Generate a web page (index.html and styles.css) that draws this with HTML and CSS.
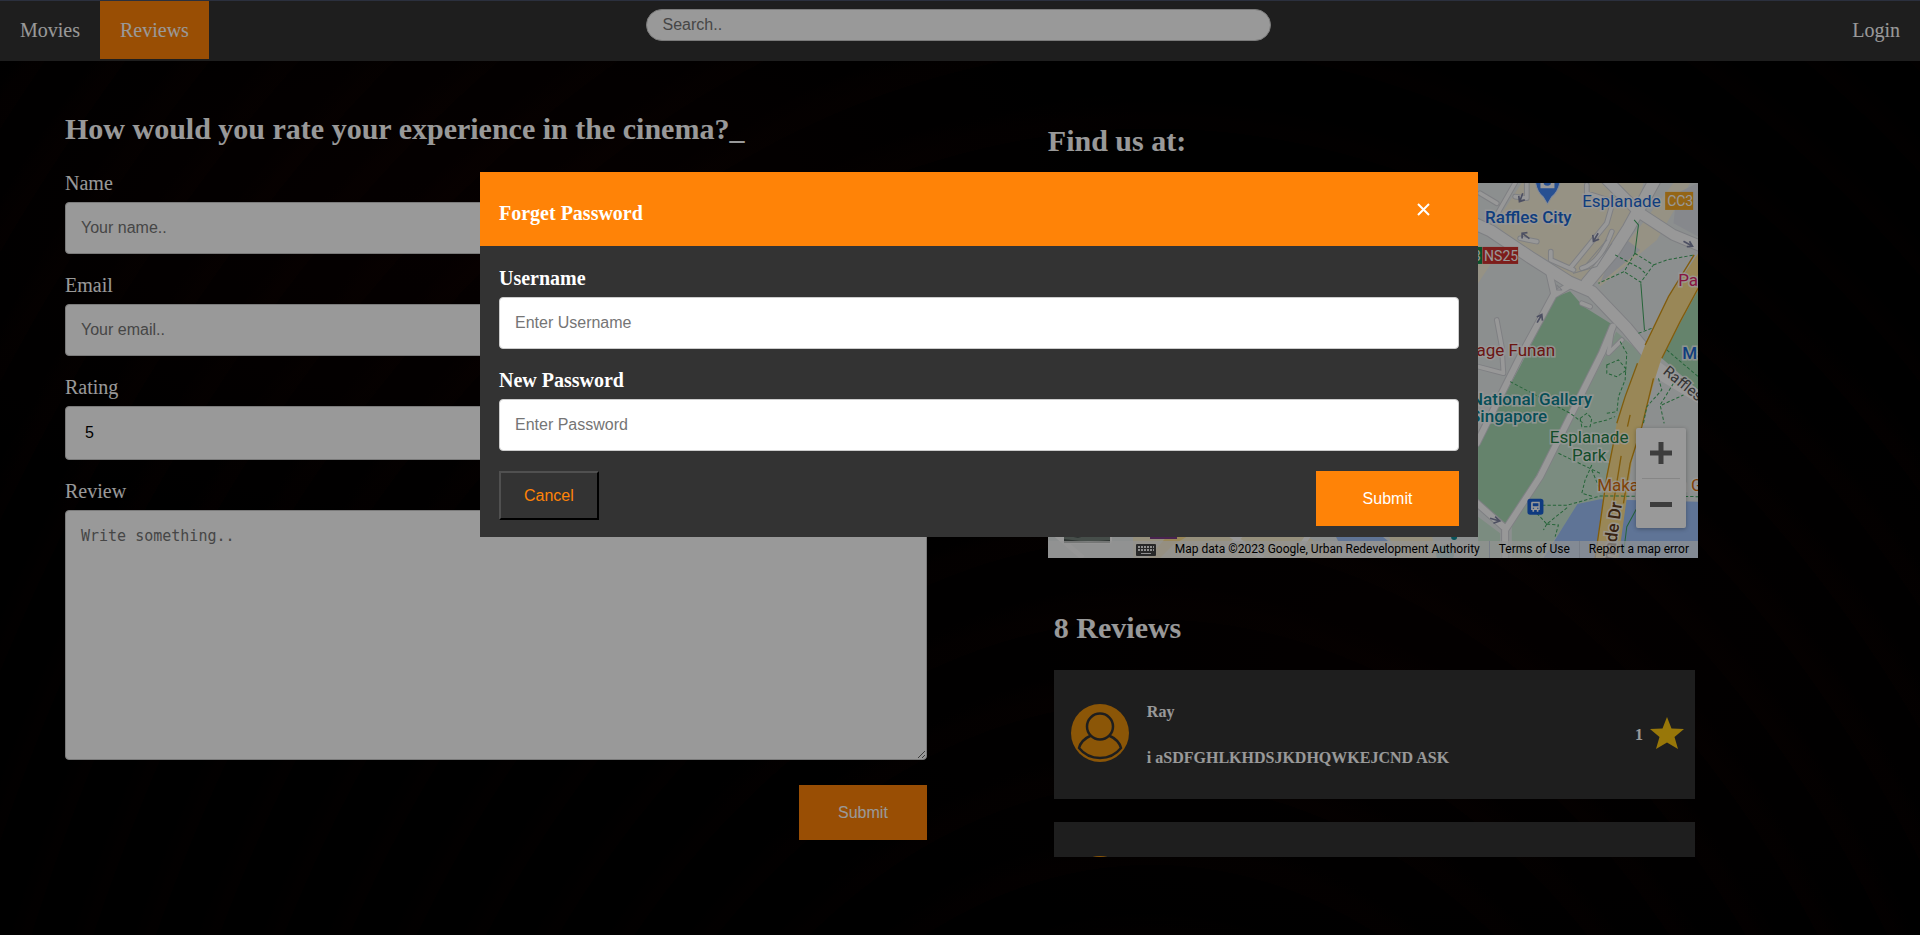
FILE: index.html
```html
<!DOCTYPE html>
<html lang="en">
<head>
<meta charset="utf-8">
<title>Cinema Reviews</title>
<link rel="stylesheet" href="styles.css">
</head>
<body>
<nav class="navbar">
  <div class="nav-links">
    <a class="nav-link" href="#movies">Movies</a>
    <a class="nav-link active" href="#reviews">Reviews</a>
  </div>
  <input class="search" type="search" placeholder="Search.." aria-label="Search">
  <div class="nav-links nav-right">
    <a class="nav-link" href="#login">Login</a>
  </div>
</nav>

<main class="page">
  <form class="review-form">
    <h2 class="heading">How would you rate your experience in the cinema?_</h2>
    <div class="field">
      <label class="label" for="name">Name</label>
      <input class="control" id="name" type="text" placeholder="Your name..">
    </div>
    <div class="field">
      <label class="label" for="email">Email</label>
      <input class="control" id="email" type="email" placeholder="Your email..">
    </div>
    <div class="field">
      <label class="label" for="rating">Rating</label>
      <select class="control rating" id="rating">
        <option>5</option><option>4</option><option>3</option><option>2</option><option>1</option>
      </select>
    </div>
    <div class="field">
      <label class="label" for="review">Review</label>
      <textarea class="control review-text" id="review" placeholder="Write something.."></textarea>
    </div>
    <button class="button review-submit" type="button">Submit</button>
  </form>

  <section class="side">
    <h2 class="heading">Find us at:</h2>
    <div class="map">
      <svg class="map-art" viewBox="0 0 650 375" preserveAspectRatio="xMaxYMax slice" role="img" aria-label="Map">
        <rect width="650" height="375" fill="#eaeeee"/>
        <g transform="translate(392 -23) scale(.33333)">
          <path fill="#faf3dc" d="M245 69H610L585 160 520 240 440 368 400 355 340 310 215 240 165 190 205 130z"/>
          <path fill="#faf3dc" d="M114 400V250L160 300 114 370zM600 200L700 69H750L650 240 480 380 470 360z"/>
          <path fill="#dfe3ea" d="M560 240L600 270 480 370 500 320zM710 100L774 69V230L700 190z"/>
          <path fill="#a8dab5" d="M345 412L390 394 430 440 520 496 480 590 430 690 320 890 215 1080 195 1090 114 1020V850L240 620 300 500z"/>
          <path fill="#ceead6" d="M528 515L615 590 600 650 545 790 490 1070 410 1040 350 1130 300 1194H215V1100L330 900 440 690 500 580z"/>
          <path fill="#a8dab5" d="M774 390L725 480 665 595 774 690z"/>
          <path fill="#ceead6" d="M114 1070L180 1120V1194H114z"/>
          <path fill="#9ec1fa" d="M338 1150L412 1032 480 1018 774 1025V1194H310z"/>
          <g fill="none" stroke-linejoin="round" stroke-linecap="round">
            <g stroke="#d3d5da">
              <path stroke-width="40" d="M90 185L150 212 270 292 385 365 455 395 560 505 630 590"/>
              <path stroke-width="36" d="M470 30L545 105 600 160 700 225 790 262"/>
              <path stroke-width="40" d="M650 50L565 205 520 275 440 370"/>
              <path stroke-width="24" d="M328 340L342 402 300 480 240 590 110 850M342 404L400 370M518 500L485 580 430 690 300 950 195 1110V1200M100 1020L190 1100"/>
              <path stroke-width="17" d="M520 120L500 190 390 325M425 325Q480 310 515 215M332 275V300L400 330M170 480L185 560 190 640 114 620M260 69V115L225 110M225 69L170 165M120 100L170 130M440 75V100L520 125M425 430L450 440M240 235L290 245M515 515L505 580 545 540"/>
            </g>
            <g stroke="#fdfdfe">
              <path stroke-width="34" d="M90 185L150 212 270 292 385 365 455 395 560 505 630 590"/>
              <path stroke-width="30" d="M470 30L545 105 600 160 700 225 790 262"/>
              <path stroke-width="34" d="M650 50L565 205 520 275 440 370"/>
              <path stroke-width="18" d="M328 340L342 402 300 480 240 590 110 850M342 404L400 370M518 500L485 580 430 690 300 950 195 1110V1200M100 1020L190 1100"/>
              <path stroke-width="11" d="M520 120L500 190 390 325M425 325Q480 310 515 215M332 275V300L400 330M170 480L185 560 190 640 114 620M260 69V115L225 110M225 69L170 165M120 100L170 130M440 75V100L520 125M425 430L450 440M240 235L290 245M515 515L505 580 545 540"/>
            </g>
            <g stroke="#cfd2d8" stroke-width="3">
              <path d="M500 240L440 310M515 250L470 320 400 340M350 375V390H365z"/>
            </g>
          </g>
          <path fill="#fff" d="M650 600L774 690V730L640 650z"/>
          <path fill="#ffe291" d="M774 280L690 405 615 555 560 700 530 790 500 940 465 1194H535L575 905 645 655 665 592 725 475 774 385z"/>
          <path fill="none" stroke="#d99a14" stroke-width="4" d="M762 285L685 410 615 555M592 610L555 710 530 790M524 830L500 950 465 1194M774 385L720 485 665 595M640 655L605 800 570 910 550 1030M570 765L562 800M543 888L515 1060"/>
          <g fill="none" stroke="#3fa75f" stroke-width="3">
            <path d="M582 180L595 195 584 280M602 370L613 510M590 1045L560 1100 550 1180"/>
            <path stroke-dasharray="10 6" d="M525 285L600 325 620 345M584 280L552 335 475 370M584 280L640 315 602 367 552 335M640 315L680 300 762 285M595 520L635 505M680 570L774 650M210 665L390 760 430 790M355 880L480 940M290 1036H380L480 1008 774 1010M290 1060L320 1092 385 1040M320 1092L355 1095 345 1130M320 1092L310 1110M540 545L560 580 555 660 535 710 530 760M500 615L535 600 560 630 530 650 500 640zM420 775L440 760 455 775 450 800 425 800zM460 790L500 780 525 770M500 760L530 755M455 915L435 960 425 1000 460 1010M455 930L480 990M655 655L665 690 620 740 610 790M700 670L660 735 672 790M665 735L730 705"/>
          </g>
          <g fill="none" stroke="#8085a3" stroke-width="5">
            <path d="M248 100L240 122M236 108L238 125 254 120M268 236L248 221M246 236L246 220 262 218M474 220L461 242M458 225L460 244 477 238M730 244L756 258M748 244L757 259 740 260M291 488L304 466M290 471L305 464 307 482M150 1075L178 1083M165 1070L179 1083 160 1090"/>
          </g>
          <path fill="#4285f4" stroke="#d8e6ff" stroke-width="3" d="M286 66Q290 96 310 112L322 132 334 112Q354 96 360 66z"/>
          <path fill="#fff" d="M301 66H343V85H301z"/><path fill="#4285f4" d="M311 66H332V73Q322 82 311 73z"/>
          <rect x="675" y="96" width="84" height="54" fill="#f7a823"/>
          <rect x="60" y="261" width="66" height="51" fill="#0f8a48"/>
          <rect x="127" y="261" width="107" height="51" fill="#d0312d"/>
          <rect x="262" y="1016" width="48" height="48" rx="8" fill="#1a62d6"/>
          <path fill="#fff" d="M275 1025H299V1050H295V1055H290V1050H282V1055H277V1050H273V1028z"/>
          <path fill="#1a62d6" d="M278 1030H295V1039H278zM278 1043H282V1046H278zM291 1043H295V1046H291z"/>
        </g>
        <!-- street strip along the bottom-left corner -->
        <path fill="#fbf1cf" d="M85 340H240L290 375H85z"/>
        <path fill="#9ec1fa" d="M286 350H330L340 358H290z"/>
        <path fill="#fbf1cf" d="M335 340H380L390 375H350z"/>
        <path fill="#ffe291" d="M122 350H145L125 362 112 375H100z"/>
        <path stroke="#fff" stroke-width="5" fill="none" d="M0 345L35 375M180 350L215 375M195 350L175 370M262 350L245 375"/>
        <rect x="102" y="340" width="27" height="16" fill="#7b3b86"/>
        <rect x="14" y="330" width="50" height="31" rx="3" fill="#fff"/>
        <rect x="16" y="330" width="46" height="30" fill="#4b5653"/>
        <path fill="#76827c" d="M16 352L30 355 44 351 62 354V357L40 359 16 356z"/>
        <circle cx="397" cy="371" r="9" fill="#86d3dc"/>
        <circle cx="406" cy="354" r="3" fill="#108a98"/>
        <g class="map-text">
          <text class="blue strong" x="437" y="40">Raffles City</text>
          <text class="blue" x="534" y="24">Esplanade</text>
          <text class="badge" x="619" y="23">CC3</text>
          <text class="badge" x="425" y="78">3</text>
          <text class="badge" x="436" y="78">NS25</text>
          <text class="red" x="507" y="173" text-anchor="end">Village Funan</text>
          <text class="pink" x="630" y="103">Parkview</text>
          <text class="blue strong" x="634" y="176">Marina</text>
          <text class="teal strong" x="544" y="222" text-anchor="end">National Gallery</text>
          <text class="teal strong" x="499" y="239" text-anchor="end">Singapore</text>
          <text class="green" x="541" y="260" text-anchor="middle">Esplanade</text>
          <text class="green" x="541" y="278" text-anchor="middle">Park</text>
          <text class="orange" x="549" y="308">Makansutra Gluttons</text>
          <text class="street" x="614" y="190" transform="rotate(39 614 190)">Raffles Ave</text>
          <text class="drive" x="574" y="320" text-anchor="end" transform="rotate(-82 574 320)">Esplanade Dr</text>
        </g>
      </svg>
      <div class="zoom-box">
        <button class="zoom-button" type="button" aria-label="Zoom in"><svg width="22" height="22" viewBox="0 0 22 22"><path d="M9 0h4v9h9v4h-9v9H9v-9H0V9h9z" fill="#666" stroke="#666"/></svg></button>
        <button class="zoom-button" type="button" aria-label="Zoom out"><svg width="22" height="22" viewBox="0 0 22 22"><path d="M0 9h22v5H0z" fill="#666"/></svg></button>
      </div>
      <div class="map-footer">
        <svg class="keyboard" width="20" height="12" viewBox="0 0 20 12"><rect width="20" height="12" rx="1" fill="#444"/><path d="M2 3h16M2 6h16" stroke="#eee" stroke-width="2" stroke-dasharray="2 1"/><path d="M5 9.500h10" stroke="#eee" stroke-width="1"/></svg>
        <span class="map-note">Map data ©2023 Google, Urban Redevelopment Authority</span>
        <a class="map-note" href="#terms">Terms of Use</a>
        <a class="map-note" href="#report">Report a map error</a>
      </div>
    </div>

    <div class="reviews">
      <h2 class="heading">8 Reviews</h2>
      <div class="review-list">
        <article class="card">
          <svg class="avatar" viewBox="0 0 58 58"><circle cx="29" cy="29" r="29" fill="#e88f0c"/><g fill="none" stroke="#333" stroke-width="2.500"><ellipse cx="29" cy="22.500" rx="13" ry="13"/><path d="M20 31.500Q10 36 8 44Q16 54 29 54Q42 54 50 44Q48 36 38 31.500"/></g></svg>
          <div class="card-text">
            <h4 class="card-line">Ray</h4>
            <h4 class="card-line">i aSDFGHLKHDSJKDHQWKEJCND ASK</h4>
          </div>
          <span class="score">1</span>
          <svg class="star" viewBox="0 0 34 32"><path fill="#fdc70f" d="M17 0L21.500 11.500 34 12 24.500 20 28 32 17 25.500 6 32 9.500 20 0 12 12.500 11.500z"/></svg>
        </article>
        <article class="card">
          <svg class="avatar" viewBox="0 0 58 58"><circle cx="29" cy="29" r="29" fill="#e88f0c"/></svg>
        </article>
      </div>
    </div>
  </section>
</main>

<div class="overlay">
  <form class="modal" role="dialog" aria-labelledby="modal-title">
    <header class="modal-header">
      <h4 class="modal-title" id="modal-title">Forget Password</h4>
      <button class="close" type="button" aria-label="Close"><svg class="close-icon" width="13" height="13" viewBox="0 0 13 13"><path d="M1 1l11 11M12 1L1 12" stroke="#fff" stroke-width="2"/></svg></button>
    </header>
    <div class="modal-body">
      <div class="field">
        <label class="label strong" for="username">Username</label>
        <input class="control" id="username" type="text" placeholder="Enter Username">
      </div>
      <div class="field">
        <label class="label strong" for="password">New Password</label>
        <input class="control" id="password" type="password" placeholder="Enter Password">
      </div>
      <div class="actions">
        <button class="button cancel" type="button">Cancel</button>
        <button class="button modal-submit" type="button">Submit</button>
      </div>
    </div>
  </form>
</div>
</body>
</html>
```

FILE: styles.css
```css
* { box-sizing: border-box; }

body {
  margin: 0;
  min-height: 100vh;
  overflow: hidden;
  color: #fff;
  font-family: "Liberation Serif", "Times New Roman", serif;
  font-size: 20px;
  background:
    radial-gradient(ellipse at 25% 25%, rgba(60, 8, 0, .16), transparent 35%),
    radial-gradient(ellipse at 75% 70%, rgba(60, 10, 0, .1), transparent 40%),
    repeating-radial-gradient(ellipse at 60% 180%, rgba(70, 10, 0, .06) 0 8px, transparent 24px 56px),
    #000;
}

h2, h4 { margin: 0; }

.navbar {
  display: grid;
  grid-template-columns: 1fr 625px 1fr;
  align-items: start;
  padding-bottom: 2px;
  border-top: 1px solid #485068;
  background: #333;
}
.nav-links { display: flex; }
.nav-right { justify-content: flex-end; }
.nav-link {
  padding: 18px 20px;
  line-height: 22px;
  color: #fff;
  text-decoration: none;
}
.nav-link.active { background: #ff8307; }
.search {
  margin: 8px 2px 0 -2px;
  height: 32px;
  padding: 0 16px;
  border: 1px solid #ccc;
  border-radius: 16px;
  background: #fff;
  font: 16px "Liberation Sans", Arial, sans-serif;
  appearance: none;
}

.page {
  display: grid;
  grid-template-columns: 57fr 43fr;
  column-gap: 121px;
  padding: 51px 222px 0 65px;
}
.heading { font-size: 30px; line-height: 34px; }

.review-form, .modal-body {
  display: flex;
  flex-direction: column;
  gap: 20px;
}
.review-form .heading { margin-bottom: 6px; }
.field {
  display: flex;
  flex-direction: column;
  gap: 7px;
}
.label { line-height: 23px; }
.strong { font-weight: bold; }
.control {
  width: 100%;
  padding: 16px 15px;
  border: 1px solid #ccc;
  border-radius: 4px;
  background: #fff;
  color: #000;
  font: 16px/18px "Liberation Sans", Arial, sans-serif;
}
.control::placeholder, .search::placeholder { color: #757575; }
.rating {
  padding: 17px 19px;
  appearance: none;
}
.review-text {
  height: 250px;
  font: 15px/18px "DejaVu Sans Mono", monospace;
}
.button {
  padding: 18px 39px;
  border: 0;
  background: #ff8307;
  color: #fff;
  font: 16px/19px "Liberation Sans", Arial, sans-serif;
}
.review-submit { align-self: flex-end; margin-top: 5px; }

.side { padding-top: 12px; }
.map {
  position: relative;
  height: 375px;
  margin: 25px 0 53px;
  overflow: hidden;
}
.map-art { display: block; width: 100%; height: 100%; }
.map-text {
  font-family: Roboto, sans-serif;
  font-size: 17px;
  paint-order: stroke;
  stroke: rgba(255, 255, 255, .8);
  stroke-width: 3px;
}
.map-text .strong { font-weight: 500; }
.blue { fill: #1967d2; }
.red { fill: #b3261e; }
.pink { fill: #e0266e; }
.teal { fill: #0b8391; }
.green { fill: #228045; }
.orange { fill: #d56e0c; }
.badge { fill: #fff; stroke: none; font-size: 14px; }
.street { fill: #555; font-size: 15px; }
.drive { fill: #5f3d20; font-weight: 500; }
.zoom-box {
  position: absolute;
  right: 12px;
  bottom: 30px;
  width: 50px;
  padding: 0 6px;
  border-radius: 2px;
  background: #fff;
  box-shadow: 0 1px 4px rgba(0, 0, 0, .3);
}
.zoom-button {
  display: flex;
  align-items: center;
  justify-content: center;
  width: 100%;
  height: 50px;
  padding: 0;
  border: 0;
  background: none;
}
.zoom-button + .zoom-button { border-top: 1px solid #e0e0e0; }
.map-footer {
  position: absolute;
  right: 0;
  bottom: 0;
  left: 0;
  display: flex;
  align-items: center;
  justify-content: flex-end;
  height: 17px;
  background: rgba(245, 245, 245, .7);
}
.map-note {
  padding: 0 9px;
  color: #000;
  font: 12px/17px Roboto, sans-serif;
  text-decoration: none;
  white-space: nowrap;
}
.map-note + .map-note { border-left: 1px solid #c9d3e3; }
.keyboard { margin-right: 10px; }

.reviews { padding: 0 3px 0 6px; }
.review-list {
  display: flex;
  flex-direction: column;
  gap: 23px;
  height: 20vh;
  margin-top: 25px;
  overflow: hidden;
}
.card {
  display: flex;
  flex: none;
  align-items: center;
  height: 129px;
  padding: 0 11px 0 17px;
  background: #333;
  font-size: 16px;
  line-height: 18px;
  font-weight: bold;
}
.avatar { width: 58px; height: 58px; margin-bottom: 4px; }
.card-text {
  display: grid;
  gap: 28px;
  margin: 0 auto 0 18px;
}
.card-line { font-size: 16px; }
.star { width: 34px; height: 32px; margin: 0 0 4px 7px; }

.overlay {
  position: fixed;
  inset: 0;
  padding-top: 172px;
  background: rgba(0, 0, 0, .4);
}
.modal {
  width: 52%;
  margin-left: 25%;
  background: #333;
}
.modal-header {
  display: flex;
  align-items: center;
  justify-content: space-between;
  height: 74px;
  padding-left: 19px;
  background: #ff8307;
}
.modal-title { padding-top: 8px; font-size: 20px; line-height: 22px; }
.close {
  padding: 0 48px;
  border: 0;
  background: none;
}
.close-icon { display: block; }
.modal-body { padding: 21px 19px 11px; }
.actions {
  display: flex;
  align-items: flex-start;
  justify-content: space-between;
}
.cancel {
  padding: 13px 23px;
  border: 2px outset #555;
  border-color: #505050 #000 #000 #505050;
  background: #333;
  color: #ff8307;
}
.modal-submit { padding: 18px 47px; }
```
